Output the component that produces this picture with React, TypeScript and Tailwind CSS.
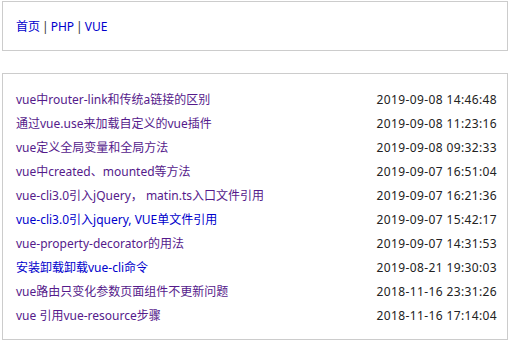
export default function App() {
  const items: { t: string; d: string; c: string }[] = [
    { t: "vue中router-link和传统a链接的区别", d: "2019-09-08 14:46:48", c: "text-[#551a8b]" },
    { t: "通过vue.use来加载自定义的vue插件", d: "2019-09-08 11:23:16", c: "text-[#551a8b]" },
    { t: "vue定义全局变量和全局方法", d: "2019-09-08 09:32:33", c: "text-[#551a8b]" },
    { t: "vue中created、mounted等方法", d: "2019-09-07 16:51:04", c: "text-[#551a8b]" },
    { t: "vue-cli3.0引入jQuery， matin.ts入口文件引用", d: "2019-09-07 16:21:36", c: "text-[#551a8b]" },
    { t: "vue-cli3.0引入jquery, VUE单文件引用", d: "2019-09-07 15:42:17", c: "text-[#0000cc]" },
    { t: "vue-property-decorator的用法", d: "2019-09-07 14:31:53", c: "text-[#551a8b]" },
    { t: "安装卸载卸载vue-cli命令", d: "2019-08-21 19:30:03", c: "text-[#0000cc]" },
    { t: "vue路由只变化参数页面组件不更新问题", d: "2018-11-16 23:31:26", c: "text-[#551a8b]" },
    { t: "vue 引用vue-resource步骤", d: "2018-11-16 17:14:04", c: "text-[#551a8b]" },
  ];
  return (
    <div
      className="bg-white w-[510px] h-[341px] pt-[1px] pl-[2px] text-[12px] text-[#333]"
      style={{ fontFamily: '"Noto Sans", "Noto Sans CJK SC", sans-serif' }}
    >
      <div className="w-[506px] h-[50px] border border-[#ccc] flex items-center pl-[13px] pt-[1px]">
        <a className="text-[#0000cc]">首页</a>
        <span className="mx-[2px]">|</span>
        <a className="text-[#0000cc]">PHP</a>
        <span className="mx-[2px]">|</span>
        <a className="text-[#0000cc]">VUE</a>
      </div>
      <div className="w-[506px] h-[267px] mt-[22px] border border-[#ccc] pt-[14px] pl-[13px] pr-[10px]">
        {items.map((it) => (
          <div key={it.d} className="h-[24px] flex items-center justify-between">
            <a className={it.c}>{it.t}</a>
            <span className="text-[#222] tracking-[0.37px]">{it.d}</span>
          </div>
        ))}
      </div>
    </div>
  );
}
